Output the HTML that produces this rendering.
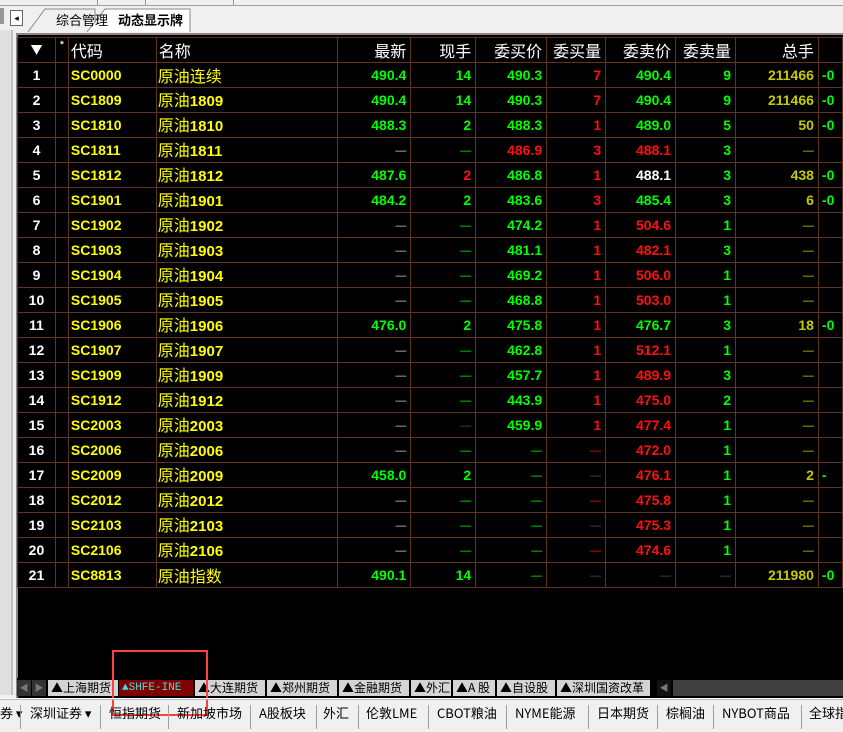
<!DOCTYPE html>
<html><head><meta charset="utf-8"><style>
*{margin:0;padding:0;box-sizing:border-box}
body{width:843px;height:732px;background:#f0f0f0;position:relative;overflow:hidden;font-family:"Liberation Sans","Noto Sans CJK SC",sans-serif}
.abs{position:absolute}
#panel{left:16px;top:33px;width:827px;height:665px;background:#000;border-top:2px solid #888;border-left:2px solid #888}
table{position:absolute;left:17px;top:37px;border-collapse:collapse;table-layout:fixed;background:#000}
td{height:25px;border:1px solid #5c3422;font:bold 14px "Liberation Sans",sans-serif;line-height:16px;text-align:right;padding:0 4px 0 0;white-space:nowrap;overflow:hidden;color:#00ff00;vertical-align:middle}
tr.h td{font:16px "Noto Sans CJK SC",sans-serif;line-height:16px;color:#fff;font-weight:normal}
td.n{text-align:center;color:#fff;padding:0}
td.c{text-align:left;color:#ffff00;padding-left:2px}
td.m{text-align:left;color:#ffff00;font:16px "Noto Sans CJK SC",sans-serif;line-height:16px;padding-left:1px}
td.m b{font:bold 15px "Liberation Sans",sans-serif}
.r{color:#ff1010}.w{color:#fff}.y{color:#c8c800}.g{color:#505050}.d{color:#ccc}
i{font-style:normal;font-weight:normal;font-size:11px}
td.x{text-align:left;padding-left:3px}
.tab{position:absolute;top:680px;height:16px;font:12px "Noto Sans CJK SC",sans-serif;color:#000;background:#d4d4d4;line-height:16px;padding:0 0 0 3px;white-space:nowrap;overflow:hidden}
.bt{position:absolute;top:703px;height:28px;line-height:28px;font:13px "Noto Sans CJK SC",sans-serif;color:#000;white-space:nowrap}
.sep{position:absolute;top:705px;width:1px;height:24px;background:#a0a0a0}
</style></head><body>
<div class="abs" style="left:0;top:0;width:843px;height:6px;background:#f0f0f0;border-bottom:1px solid #a0a0a0"></div>
<div class="abs" style="left:97px;top:0;width:1px;height:5px;background:#999"></div>
<div class="abs" style="left:145px;top:0;width:1px;height:5px;background:#999"></div>
<div class="abs" style="left:233px;top:0;width:1px;height:5px;background:#999"></div>
<div class="abs" style="left:0;top:8px;width:4px;height:16px;background:#999"></div>
<div class="abs" style="left:0;top:30px;width:13px;height:665px;background:#e0e0e0;border-right:2px solid #c0c0c0"></div>
<div class="abs" style="left:10px;top:10px;width:13px;height:16px;border:1px solid #666;background:#fff;font-size:9px;line-height:14px;text-align:center">◂</div>
<svg class="abs" style="left:25px;top:7px" width="170" height="26"><path d="M3 25 L20 2 L70 2 L70 25" fill="#f0f0f0" stroke="#888"/><path d="M62 25 L80 2 L165 2 L165 25" fill="#fff" stroke="#888"/></svg>
<div class="abs" style="left:56px;top:10px;font:13px 'Noto Sans CJK SC',sans-serif">综合管理</div>
<div class="abs" style="left:118px;top:10px;font:bold 13px 'Noto Sans CJK SC',sans-serif">动态显示牌</div>
<div id="panel" class="abs"></div>
<table>
<colgroup><col style="width:38px"><col style="width:13px"><col style="width:88px"><col style="width:182px"><col style="width:73px"><col style="width:65px"><col style="width:71px"><col style="width:59px"><col style="width:70px"><col style="width:60px"><col style="width:83px"><col style="width:24px"></colgroup>
<tr class="h"><td class="n" style="font-size:12px">▼</td><td class="n" style="vertical-align:top;font-size:12px">*</td><td style="text-align:left;padding-left:2px">代码</td><td style="text-align:left;padding-left:2px">名称</td><td>最新</td><td>现手</td><td>委买价</td><td>委买量</td><td>委卖价</td><td>委卖量</td><td>总手</td><td></td></tr>
<tr><td class="n">1</td><td></td><td class="c">SC0000</td><td class="m">原油连续</td><td>490.4</td><td>14</td><td>490.3</td><td class="r">7</td><td>490.4</td><td>9</td><td class="y">211466</td><td class="x">-0</td></tr>
<tr><td class="n">2</td><td></td><td class="c">SC1809</td><td class="m">原油<b>1809</b></td><td>490.4</td><td>14</td><td>490.3</td><td class="r">7</td><td>490.4</td><td>9</td><td class="y">211466</td><td class="x">-0</td></tr>
<tr><td class="n">3</td><td></td><td class="c">SC1810</td><td class="m">原油<b>1810</b></td><td>488.3</td><td>2</td><td>488.3</td><td class="r">1</td><td>489.0</td><td>5</td><td class="y">50</td><td class="x">-0</td></tr>
<tr><td class="n">4</td><td></td><td class="c">SC1811</td><td class="m">原油<b>1811</b></td><td class="d"><i>—</i></td><td><i>—</i></td><td class="r">486.9</td><td class="r">3</td><td class="r">488.1</td><td>3</td><td class="y"><i>—</i></td><td></td></tr>
<tr><td class="n">5</td><td></td><td class="c">SC1812</td><td class="m">原油<b>1812</b></td><td>487.6</td><td class="r">2</td><td>486.8</td><td class="r">1</td><td class="w">488.1</td><td>3</td><td class="y">438</td><td class="x">-0</td></tr>
<tr><td class="n">6</td><td></td><td class="c">SC1901</td><td class="m">原油<b>1901</b></td><td>484.2</td><td>2</td><td>483.6</td><td class="r">3</td><td>485.4</td><td>3</td><td class="y">6</td><td class="x">-0</td></tr>
<tr><td class="n">7</td><td></td><td class="c">SC1902</td><td class="m">原油<b>1902</b></td><td class="d"><i>—</i></td><td><i>—</i></td><td>474.2</td><td class="r">1</td><td class="r">504.6</td><td>1</td><td class="y"><i>—</i></td><td></td></tr>
<tr><td class="n">8</td><td></td><td class="c">SC1903</td><td class="m">原油<b>1903</b></td><td class="d"><i>—</i></td><td><i>—</i></td><td>481.1</td><td class="r">1</td><td class="r">482.1</td><td>3</td><td class="y"><i>—</i></td><td></td></tr>
<tr><td class="n">9</td><td></td><td class="c">SC1904</td><td class="m">原油<b>1904</b></td><td class="d"><i>—</i></td><td><i>—</i></td><td>469.2</td><td class="r">1</td><td class="r">506.0</td><td>1</td><td class="y"><i>—</i></td><td></td></tr>
<tr><td class="n">10</td><td></td><td class="c">SC1905</td><td class="m">原油<b>1905</b></td><td class="d"><i>—</i></td><td><i>—</i></td><td>468.8</td><td class="r">1</td><td class="r">503.0</td><td>1</td><td class="y"><i>—</i></td><td></td></tr>
<tr><td class="n">11</td><td></td><td class="c">SC1906</td><td class="m">原油<b>1906</b></td><td>476.0</td><td>2</td><td>475.8</td><td class="r">1</td><td>476.7</td><td>3</td><td class="y">18</td><td class="x">-0</td></tr>
<tr><td class="n">12</td><td></td><td class="c">SC1907</td><td class="m">原油<b>1907</b></td><td class="d"><i>—</i></td><td><i>—</i></td><td>462.8</td><td class="r">1</td><td class="r">512.1</td><td>1</td><td class="y"><i>—</i></td><td></td></tr>
<tr><td class="n">13</td><td></td><td class="c">SC1909</td><td class="m">原油<b>1909</b></td><td class="d"><i>—</i></td><td><i>—</i></td><td>457.7</td><td class="r">1</td><td class="r">489.9</td><td>3</td><td class="y"><i>—</i></td><td></td></tr>
<tr><td class="n">14</td><td></td><td class="c">SC1912</td><td class="m">原油<b>1912</b></td><td class="d"><i>—</i></td><td><i>—</i></td><td>443.9</td><td class="r">1</td><td class="r">475.0</td><td>2</td><td class="y"><i>—</i></td><td></td></tr>
<tr><td class="n">15</td><td></td><td class="c">SC2003</td><td class="m">原油<b>2003</b></td><td class="d"><i>—</i></td><td class="g"><i>—</i></td><td>459.9</td><td class="r">1</td><td class="r">477.4</td><td>1</td><td class="y"><i>—</i></td><td></td></tr>
<tr><td class="n">16</td><td></td><td class="c">SC2006</td><td class="m">原油<b>2006</b></td><td class="d"><i>—</i></td><td><i>—</i></td><td><i>—</i></td><td class="r"><i>—</i></td><td class="r">472.0</td><td>1</td><td class="y"><i>—</i></td><td></td></tr>
<tr><td class="n">17</td><td></td><td class="c">SC2009</td><td class="m">原油<b>2009</b></td><td>458.0</td><td>2</td><td><i>—</i></td><td class="g"><i>—</i></td><td class="r">476.1</td><td>1</td><td class="y">2</td><td class="x">-</td></tr>
<tr><td class="n">18</td><td></td><td class="c">SC2012</td><td class="m">原油<b>2012</b></td><td class="d"><i>—</i></td><td><i>—</i></td><td><i>—</i></td><td class="r"><i>—</i></td><td class="r">475.8</td><td>1</td><td class="y"><i>—</i></td><td></td></tr>
<tr><td class="n">19</td><td></td><td class="c">SC2103</td><td class="m">原油<b>2103</b></td><td class="d"><i>—</i></td><td><i>—</i></td><td><i>—</i></td><td class="g"><i>—</i></td><td class="r">475.3</td><td>1</td><td class="y"><i>—</i></td><td></td></tr>
<tr><td class="n">20</td><td></td><td class="c">SC2106</td><td class="m">原油<b>2106</b></td><td class="d"><i>—</i></td><td><i>—</i></td><td><i>—</i></td><td class="r"><i>—</i></td><td class="r">474.6</td><td>1</td><td class="y"><i>—</i></td><td></td></tr>
<tr><td class="n">21</td><td></td><td class="c">SC8813</td><td class="m">原油指数</td><td>490.1</td><td>14</td><td><i>—</i></td><td class="g"><i>—</i></td><td class="g"><i>—</i></td><td class="g"><i>—</i></td><td class="y">211980</td><td class="x">-0</td></tr>
</table>
<div class="abs" style="left:17px;top:678px;width:826px;height:18px;background:#000"></div>
<div class="abs" style="left:17px;top:680px;width:14px;height:16px;background:#333;color:#777;font-size:9px;text-align:center;line-height:16px">◀</div>
<div class="abs" style="left:32px;top:680px;width:14px;height:16px;background:#333;color:#777;font-size:9px;text-align:center;line-height:16px">▶</div>
<div class="tab" style="left:48px;width:70px">▲上海期货</div>
<div class="tab" style="left:119px;width:74px;background:#800000;color:#40e0e0;font:11px 'Liberation Mono',monospace;line-height:16px">▲SHFE-INE</div>
<div class="tab" style="left:195px;width:70px">▲大连期货</div>
<div class="tab" style="left:267px;width:70px">▲郑州期货</div>
<div class="tab" style="left:339px;width:70px">▲金融期货</div>
<div class="tab" style="left:411px;width:40px">▲外汇</div>
<div class="tab" style="left:453px;width:42px">▲A 股</div>
<div class="tab" style="left:497px;width:58px">▲自设股</div>
<div class="tab" style="left:557px;width:93px">▲深圳国资改革</div>
<div class="abs" style="left:657px;top:680px;width:14px;height:16px;background:#111;color:#777;font-size:9px;text-align:center;line-height:16px">◀</div>
<div class="abs" style="left:673px;top:680px;width:170px;height:16px;background:#404040"></div>
<div class="abs" style="left:112px;top:650px;width:96px;height:66px;border:2px solid #ff4040"></div>
<div class="abs" style="left:0;top:698px;width:843px;height:2px;background:#fff;border-bottom:1px solid #bbb"></div>
<div class="bt" style="left:0">券 ▾</div>
<div class="bt" style="left:30px">深圳证券 ▾</div>
<div class="bt" style="left:109px">恒指期货</div>
<div class="bt" style="left:177px">新加坡市场</div>
<div class="bt" style="left:259px">A股板块</div>
<div class="bt" style="left:323px">外汇</div>
<div class="bt" style="left:366px">伦敦LME</div>
<div class="bt" style="left:437px">CBOT粮油</div>
<div class="bt" style="left:515px">NYME能源</div>
<div class="bt" style="left:597px">日本期货</div>
<div class="bt" style="left:666px">棕榈油</div>
<div class="bt" style="left:722px">NYBOT商品</div>
<div class="bt" style="left:809px">全球指</div>
<div class="sep" style="left:20px"></div><div class="sep" style="left:100px"></div><div class="sep" style="left:168px"></div><div class="sep" style="left:250px"></div><div class="sep" style="left:316px"></div><div class="sep" style="left:358px"></div><div class="sep" style="left:428px"></div><div class="sep" style="left:506px"></div><div class="sep" style="left:588px"></div><div class="sep" style="left:657px"></div><div class="sep" style="left:713px"></div><div class="sep" style="left:801px"></div>
</body></html>
